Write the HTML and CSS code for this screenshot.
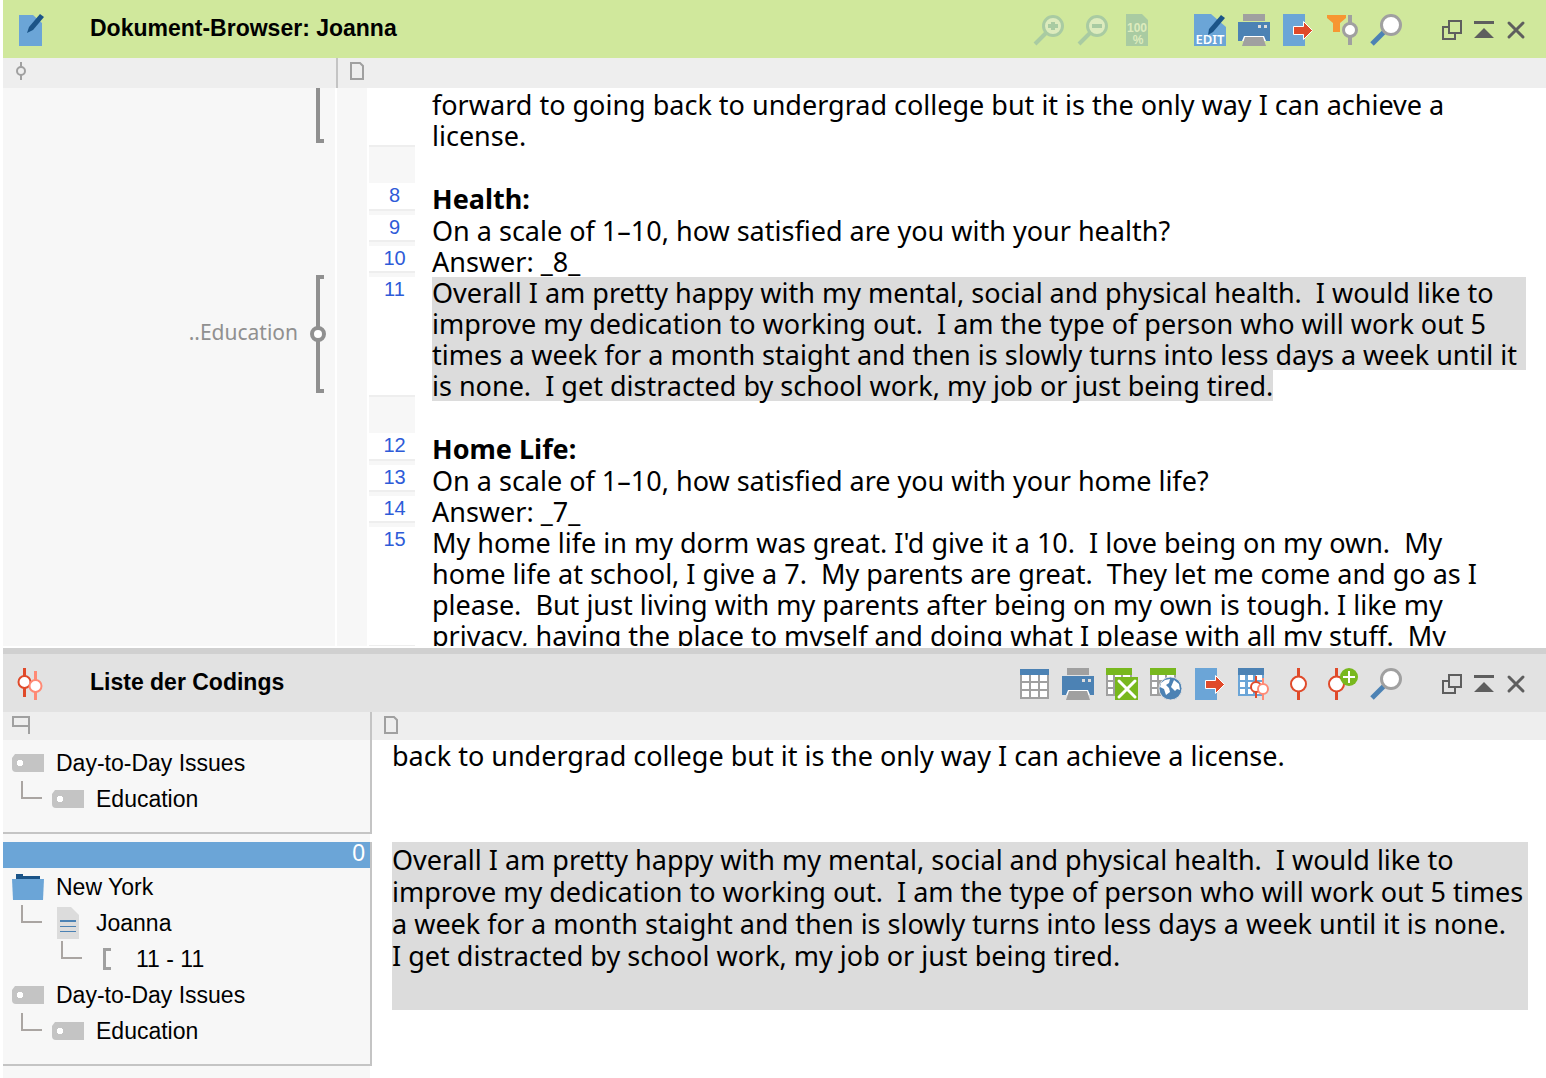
FILE: index.html
```html
<!DOCTYPE html>
<html lang="de">
<head>
  <meta charset="UTF-8" />
  <meta name="viewport" content="width=device-width, initial-scale=1" />
  <title>Dokument-Browser: Joanna</title>
  <link rel="stylesheet" href="styles.css">
</head>
<body>

  <!-- shared icons -->
  <svg class="sprite" aria-hidden="true">
    <symbol id="i-print" viewBox="0 0 32 32">
      <path fill="#a0a0a0" d="M5 0h22v7H5z" />
      <path fill="#4c82b4" d="M0 8h32v19H0z" />
      <path fill="#dcdcdc" d="M20 11h3v3h-3zM26 11h3v3h-3z" />
      <path fill="#fff" d="M6 22h20l2 5H4z" />
      <path fill="#a0a0a0" d="M7 23h18l3 9H4z" />
    </symbol>
    <symbol id="i-export" viewBox="0 0 32 32">
      <path fill="#6ba5d7" d="M1 0h22v32H1z" />
      <path fill="#e04a2a" stroke="#fff" d="M11.500 12.500h10v-5l9 9-9 9v-5h-10z" />
    </symbol>
    <symbol id="i-search" viewBox="0 0 32 32">
      <path stroke="#4c82b4" stroke-width="5" d="M15 17L2 30" />
      <circle cx="21" cy="11" r="9.500" fill="#fff" stroke="#a0a0a0" stroke-width="3" />
    </symbol>
    <symbol id="i-restore" viewBox="0 0 20 20">
      <path fill="none" stroke="#5e5e5e" stroke-width="2" d="M7 1h12v12H7zM6 7H1v12h12v-5" />
    </symbol>
    <symbol id="i-collapse" viewBox="0 0 20 20">
      <path fill="#5e5e5e" d="M0 1h20v3H0zM10 8l10 10H0z" />
    </symbol>
    <symbol id="i-close" viewBox="0 0 20 20">
      <path stroke="#5e5e5e" stroke-width="3" stroke-linecap="round" d="M3 3l14 14M17 3L3 17" />
    </symbol>
    <symbol id="i-page" viewBox="0 0 14 18">
      <path fill="none" stroke="#a0a0a0" stroke-width="2" d="M1 1h9l3 3v13H1z" />
    </symbol>
    <symbol id="i-tag" viewBox="0 0 32 18">
      <path fill="#c4c4c4" d="M3 0h29v18H4q-4 0-4-4V4z" />
      <path fill="#fff" d="M6 6h4v1h1v4h-1v1H6v-1H5V7h1z" />
    </symbol>
    <symbol id="i-branch" viewBox="0 0 22 18">
      <path fill="none" stroke="#aaa5a2" stroke-width="2" d="M2 0v17h20" />
    </symbol>
  </svg>

  <section class="pane">
    <header class="titlebar titlebar-active">
      <svg class="logo" viewBox="0 0 32 32" aria-hidden="true">
        <path fill="#6ba5d7" d="M3 1h14l9 8v23H3z" />
        <path fill="#1b5488" d="M24 0l4 3-11 13-6 3 2-6z" />
      </svg>
      <h1>Dokument-Browser: Joanna</h1>
      <div class="tools">
        <button type="button" aria-label="Vergrößern" disabled>
          <svg viewBox="0 0 32 32">
            <path stroke="#a9cba2" stroke-width="4" d="M12 19L1 30" />
            <circle cx="19" cy="12" r="9.500" fill="#ddebbd" stroke="#a9cba2" stroke-width="3" />
            <path fill="#a9cba2" d="M17 8h4v2h3v4h-3v2h-4v-2h-3v-4h3z" />
          </svg>
        </button>
        <button type="button" aria-label="Verkleinern" disabled>
          <svg viewBox="0 0 32 32">
            <path stroke="#a9cba2" stroke-width="4" d="M12 19L1 30" />
            <circle cx="19" cy="12" r="9.500" fill="#ddebbd" stroke="#a9cba2" stroke-width="3" />
            <path fill="#a9cba2" d="M14 10h10v4H14z" />
          </svg>
        </button>
        <button type="button" disabled>
          <svg viewBox="0 0 32 32">
            <path fill="#a9cba2" d="M4 0h16l6 6v26H4z" />
            <text class="icon-zoom" x="15" y="18" text-anchor="middle">100</text>
            <text class="icon-zoom" x="16" y="30" text-anchor="middle">%</text>
          </svg>
        </button>
      </div>
      <div class="tools">
        <button type="button">
          <svg viewBox="0 0 32 32">
            <path fill="#6ba5d7" d="M0 0h17l15 13v19H0z" />
            <path fill="#1b5488" d="M27 1l4 3-12 14-5 3 1-6z" />
            <text class="icon-edit" x="16" y="30" text-anchor="middle">EDIT</text>
          </svg>
        </button>
        <button type="button" aria-label="Drucken"><svg><use href="#i-print" /></svg></button>
        <button type="button" aria-label="Exportieren"><svg><use href="#i-export" /></svg></button>
        <button type="button" aria-label="Filter">
          <svg viewBox="0 0 32 32">
            <path fill="#f79632" d="M1 1h19v3l-6 5v9H7V9L1 4z" />
            <path fill="#a0a0a0" d="M22 1h4v30h-4z" />
            <circle cx="24" cy="16" r="6.500" fill="#fff" stroke="#a0a0a0" stroke-width="3" />
          </svg>
        </button>
        <button type="button" aria-label="Suchen"><svg><use href="#i-search" /></svg></button>
      </div>
      <div class="window-buttons">
        <button type="button" aria-label="Abdocken"><svg><use href="#i-restore" /></svg></button>
        <button type="button" aria-label="Minimieren"><svg><use href="#i-collapse" /></svg></button>
        <button type="button" aria-label="Schließen"><svg><use href="#i-close" /></svg></button>
      </div>
    </header>

    <div class="columns columns-doc">
      <div class="column-code">
        <svg width="12" height="18" viewBox="0 0 12 18" aria-hidden="true">
          <path stroke="#a0a0a0" stroke-width="2" d="M6 0v5M6 13v5" />
          <circle cx="6" cy="9" r="4" fill="none" stroke="#a0a0a0" stroke-width="2" />
        </svg>
      </div>
      <div class="column-page"><svg width="14" height="18" aria-hidden="true"><use href="#i-page" /></svg></div>
    </div>

    <div class="document">
      <div class="row">
        <div class="coding"><span class="stripe stripe-cut"></span></div>
        <div class="memo"></div>
        <div class="gutter"><span class="num"></span></div>
        <p class="text">forward to going back to undergrad college but it is the only way I can achieve a
license.</p>
      </div>
      <div class="row row-blank">
        <div class="coding"></div>
        <div class="memo"></div>
        <div class="gutter"></div>
      </div>
      <div class="row">
        <div class="coding"></div>
        <div class="memo"></div>
        <div class="gutter"><span class="num">8</span></div>
        <h2 class="text">Health:</h2>
      </div>
      <div class="row">
        <div class="coding"></div>
        <div class="memo"></div>
        <div class="gutter"><span class="num">9</span></div>
        <p class="text">On a scale of 1–10, how satisfied are you with your health?</p>
      </div>
      <div class="row">
        <div class="coding"></div>
        <div class="memo"></div>
        <div class="gutter"><span class="num">10</span></div>
        <p class="text">Answer: _8_</p>
      </div>
      <div class="row">
        <div class="coding">
          <span class="code-name">..Education</span>
          <span class="stripe"><span class="knob"></span></span>
        </div>
        <div class="memo"></div>
        <div class="gutter"><span class="num">11</span></div>
        <p class="text"><span class="marked">Overall I am pretty happy with my mental, social and physical health.  I would like to
improve my dedication to working out.  I am the type of person who will work out 5
times a week for a month staight and then is slowly turns into less days a week until it</span><span class="marked marked-end">is none.  I get distracted by school work, my job or just being tired.</span></p>
      </div>
      <div class="row row-blank">
        <div class="coding"></div>
        <div class="memo"></div>
        <div class="gutter"></div>
      </div>
      <div class="row">
        <div class="coding"></div>
        <div class="memo"></div>
        <div class="gutter"><span class="num">12</span></div>
        <h2 class="text">Home Life:</h2>
      </div>
      <div class="row">
        <div class="coding"></div>
        <div class="memo"></div>
        <div class="gutter"><span class="num">13</span></div>
        <p class="text">On a scale of 1–10, how satisfied are you with your home life?</p>
      </div>
      <div class="row">
        <div class="coding"></div>
        <div class="memo"></div>
        <div class="gutter"><span class="num">14</span></div>
        <p class="text">Answer: _7_</p>
      </div>
      <div class="row">
        <div class="coding"></div>
        <div class="memo"></div>
        <div class="gutter"><span class="num">15</span></div>
        <p class="text">My home life in my dorm was great. I'd give it a 10.  I love being on my own.  My
home life at school, I give a 7.  My parents are great.  They let me come and go as I
please.  But just living with my parents after being on my own is tough. I like my
privacy, having the place to myself and doing what I please with all my stuff.  My</p>
      </div>
    </div>
  </section>

  <section class="pane pane-codings">
    <header class="titlebar">
      <svg class="logo" viewBox="0 0 32 32" aria-hidden="true">
        <path stroke="#e04a2a" stroke-width="3" d="M8.500 0v29" />
        <circle cx="8.500" cy="14" r="6" fill="#fff" stroke="#e04a2a" stroke-width="2" />
        <path stroke="#ff8a75" stroke-width="3" d="M19.500 3v29" />
        <circle cx="19.500" cy="18" r="6" fill="#fff" stroke="#ff8a75" stroke-width="2" />
      </svg>
      <h1>Liste der Codings</h1>
      <div class="tools">
        <button type="button" aria-label="Tabelle">
          <svg viewBox="0 0 32 32">
            <path fill="#a0a0a0" d="M2 1h29v30H2z" />
            <path fill="#4c82b4" d="M2 1h29v6H2z" />
            <path fill="#fff" d="M4 7h7v6H4zM13 7h7v6h-7zM22 7h7v6h-7zM4 15h7v6H4zM13 15h7v6h-7zM22 15h7v6h-7zM4 23h7v6H4zM13 23h7v6h-7zM22 23h7v6h-7z" />
          </svg>
        </button>
        <button type="button" aria-label="Drucken"><svg><use href="#i-print" /></svg></button>
        <button type="button" aria-label="Als Excel-Tabelle öffnen">
          <svg viewBox="0 0 32 32">
            <path fill="#a0a0a0" d="M0 6h26v22H0z" />
            <path fill="#78b81e" d="M0 0h26v7H0z" />
            <path fill="#fff" d="M2 7h5v5H2zM9 7h6v5H9zM17 7h7v5h-7zM2 14h5v5H2zM2 21h5v5H2z" />
            <path fill="#78b81e" d="M9 9h23v23H9z" />
            <path stroke="#fff" stroke-width="3" stroke-linecap="round" d="M13 13l16 16M29 13L13 29" />
          </svg>
        </button>
        <button type="button" aria-label="Als Webseite öffnen">
          <svg viewBox="0 0 32 32">
            <path fill="#a0a0a0" d="M0 6h26v22H0z" />
            <path fill="#78b81e" d="M0 0h26v7H0z" />
            <path fill="#fff" d="M2 7h5v5H2zM9 7h6v5H9zM17 7h7v5h-7zM2 14h5v5H2zM2 21h5v5H2z" />
            <circle cx="20.500" cy="20.500" r="11.500" fill="#4c82b4" stroke="#e2e2e2" />
            <path fill="#fff" d="M15 12l5-1-1 4-3 2 3 3 1 4-4 3-2-6-4-2 1-4zM24 12l5 4 1 6-3-1-2 2-4-4z" />
          </svg>
        </button>
        <button type="button" aria-label="Exportieren"><svg><use href="#i-export" /></svg></button>
        <button type="button" aria-label="Codings als Tabelle">
          <svg viewBox="0 0 32 32">
            <path fill="#6ba5d7" d="M0 0h26v28H0z" />
            <path fill="#4c82b4" d="M0 0h26v7H0z" />
            <path fill="#fff" d="M2 7h5v5H2zM10 7h5v5h-5zM18 7h6v5h-6zM2 14h5v5H2zM10 14h5v5h-5zM18 14h6v5h-6zM2 21h5v5H2zM10 21h5v5h-5zM18 21h6v5h-6z" />
            <path stroke="#e04a2a" stroke-width="2" d="M18 8v22" />
            <circle cx="18" cy="19" r="5" fill="#fff" stroke="#e04a2a" stroke-width="2" />
            <path stroke="#ff8a75" stroke-width="2" d="M25 10v22" />
            <circle cx="25" cy="21" r="5" fill="#fff" stroke="#ff8a75" stroke-width="2" />
          </svg>
        </button>
        <button type="button" aria-label="Coding">
          <svg viewBox="0 0 32 32">
            <path stroke="#e04a2a" stroke-width="3" d="M16.500 0v32" />
            <circle cx="16.500" cy="16" r="7.500" fill="#fff" stroke="#e04a2a" stroke-width="2" />
          </svg>
        </button>
        <button type="button" aria-label="Neues Coding">
          <svg viewBox="0 0 32 32">
            <path stroke="#e04a2a" stroke-width="3" d="M10.500 0v32" />
            <circle cx="10.500" cy="16" r="7.500" fill="#fff" stroke="#e04a2a" stroke-width="2" />
            <circle cx="23" cy="9" r="9" fill="#78b81e" />
            <path stroke="#fff" stroke-width="2" d="M23 3v12M17 9h12" />
          </svg>
        </button>
        <button type="button" aria-label="Suchen"><svg><use href="#i-search" /></svg></button>
      </div>
      <div class="window-buttons">
        <button type="button" aria-label="Abdocken"><svg><use href="#i-restore" /></svg></button>
        <button type="button" aria-label="Minimieren"><svg><use href="#i-collapse" /></svg></button>
        <button type="button" aria-label="Schließen"><svg><use href="#i-close" /></svg></button>
      </div>
    </header>

    <div class="columns columns-codings">
      <div class="column-code">
        <svg width="18" height="18" viewBox="0 0 18 18" aria-hidden="true">
          <path fill="none" stroke="#a0a0a0" stroke-width="2" d="M17 18V1H1v9h16" />
        </svg>
      </div>
      <div class="column-page"><svg width="14" height="18" aria-hidden="true"><use href="#i-page" /></svg></div>
    </div>

    <div class="codings">
      <div class="source">
        <ul class="tree">
          <li><svg class="tag"><use href="#i-tag" /></svg>Day-to-Day Issues</li>
          <li><svg class="branch"><use href="#i-branch" /></svg><svg class="tag"><use href="#i-tag" /></svg>Education</li>
        </ul>
      </div>
      <p class="passage">back to undergrad college but it is the only way I can achieve a license.</p>

      <div class="source">
        <div class="weight">0</div>
        <ul class="tree">
          <li>
            <svg class="folder" viewBox="0 0 32 26">
              <path fill="#1b5488" d="M4 0h7v2h17v4H4z" />
              <path fill="#6ba5d7" d="M0 5h32l-1 21H1z" />
            </svg>New York
          </li>
          <li>
            <svg class="branch"><use href="#i-branch" /></svg>
            <svg class="doc" viewBox="0 0 32 32">
              <path fill="#dcdcdc" d="M5 0h14l8 8v24H5z" />
              <path fill="#4c82b4" d="M8 13h16v2H8zM8 19h16v1H8zM8 24h16v1H8z" />
            </svg>Joanna
          </li>
          <li class="level-2">
            <svg class="branch"><use href="#i-branch" /></svg>
            <svg class="range" viewBox="0 0 32 22"><path fill="none" stroke="#a0a0a0" stroke-width="3" d="M19 1.500h-6.500v19H19" /></svg>11 - 11
          </li>
          <li><svg class="tag"><use href="#i-tag" /></svg>Day-to-Day Issues</li>
          <li><svg class="branch"><use href="#i-branch" /></svg><svg class="tag"><use href="#i-tag" /></svg>Education</li>
        </ul>
      </div>
      <p class="passage passage-marked">Overall I am pretty happy with my mental, social and physical health.  I would like to
improve my dedication to working out.  I am the type of person who will work out 5 times
a week for a month staight and then is slowly turns into less days a week until it is none.
I get distracted by school work, my job or just being tired.</p>
    </div>
  </section>

</body>
</html>
```

FILE: styles.css
```css
* {
  box-sizing: border-box;
}
body {
  margin: 0;
  padding-left: 3px;
  height: 100vh;
  display: grid;
  grid-template-rows: 648fr 430fr;
  overflow: hidden;
  background: #fff;
  color: #000;
  font-family: "Liberation Sans", Arial, sans-serif;
}
h1, h2, p, ul {
  margin: 0;
  padding: 0;
}
svg {
  display: block;
  flex: none;
}
.sprite {
  position: absolute;
  width: 0;
  height: 0;
}
.pane {
  display: flex;
  flex-direction: column;
  min-height: 0;
  overflow: hidden;
}
.pane-codings {
  border-top: 6px solid #d0d0d0;
}

/* title bars */
.titlebar {
  display: flex;
  align-items: center;
  gap: 40px;
  flex: none;
  height: 58px;
  padding: 2px 20px 0 13px;
  background: #e2e2e2;
}
.titlebar-active {
  background: #d0e89c;
}
.titlebar h1 {
  flex: 1;
  margin: 0 0 4px 2px;
  font-size: 23px;
  line-height: 28px;
}
.logo {
  width: 32px;
  height: 32px;
}
.tools, .window-buttons {
  display: flex;
  gap: 12px;
}
.titlebar button {
  padding: 0;
  border: 0;
  background: none;
}
.tools svg {
  width: 32px;
  height: 32px;
  overflow: visible;
}
.window-buttons svg {
  width: 20px;
  height: 20px;
}
.icon-zoom {
  font: bold 12px "Liberation Sans Narrow", "Liberation Sans", sans-serif;
  fill: #ddebbd;
}
.icon-edit {
  font: 600 13px "Noto Sans", sans-serif;
  fill: #fff;
}

/* column headers */
.columns {
  display: grid;
  flex: none;
  background: #eee;
}
.columns-doc {
  grid-template-columns: 335px 1fr;
  height: 30px;
}
.columns-codings {
  grid-template-columns: 369px 1fr;
  height: 28px;
}
.column-code {
  padding: 4px 9px;
  border-right: 2px solid #c4c4c4;
}
.columns-doc .column-code {
  padding-left: 12px;
}
.column-page {
  padding: 4px 12px;
}

/* document text */
.document {
  flex: 1;
  min-height: 0;
  overflow: hidden;
  border-bottom: 2px solid #fff;
}
.row {
  display: grid;
  grid-template-columns: 332px 30px 46px 1fr;
  column-gap: 2px;
}
.row-blank {
  height: 32px;
}
.coding, .memo, .gutter {
  background: #f7f7f7;
}
.coding {
  display: flex;
  justify-content: flex-end;
  align-items: center;
}
.code-name {
  margin: 0 18px 14px 0;
  font: 21px "Noto Sans", sans-serif;
  color: #909090;
}
.stripe {
  position: relative;
  align-self: stretch;
  width: 8px;
  margin: -2px 11px 8px 0;
  border: 4px solid #909090;
  border-right: 0;
}
.stripe-cut {
  border-top: 0;
}
.knob {
  position: absolute;
  top: calc(50% - 8px);
  left: -10px;
  width: 16px;
  height: 16px;
  border: 4px solid #909090;
  border-radius: 50%;
  background: #fff;
}
.gutter {
  display: flex;
  padding-bottom: 4px;
}
.row-blank .gutter {
  padding: 0;
}
.num {
  width: 100%;
  padding-left: 5px;
  border-bottom: 2px solid #eee;
  background: #fff;
  font-size: 20px;
  line-height: 25px;
  text-align: center;
  color: #2e5bd8;
}
.text {
  padding: 0 20px 0 15px;
  font: 27px/31px "Noto Sans", sans-serif;
  white-space: pre;
}
.row:first-child .text {
  padding-top: 1px;
}
h2.text {
  font-weight: bold;
  line-height: 32px;
}
.marked {
  display: block;
  background: #dcdcdc;
}
.marked-end {
  width: fit-content;
}

/* list of codings */
.codings {
  display: grid;
  grid-template-columns: 369px 1fr;
  grid-auto-rows: max-content;
  row-gap: 8px;
  flex: 1;
  min-height: 0;
  background: linear-gradient(to right, #f7f7f7 367px, #fff 367px);
}
.source {
  border-right: 2px solid #c4c4c4;
  border-bottom: 2px solid #c4c4c4;
}
.weight {
  height: 26px;
  padding-right: 5px;
  background: #6ba5d7;
  color: #fff;
  font-size: 23px;
  line-height: 22px;
  text-align: right;
}
.tree {
  padding: 5px 9px 15px;
  list-style: none;
  font-size: 23px;
}
.weight + .tree {
  padding-top: 1px;
}
.tree li {
  display: flex;
  align-items: center;
  height: 36px;
}
.level-2 {
  padding-left: 40px;
}
.tree svg {
  width: 32px;
  height: 32px;
  margin-right: 12px;
}
.tree .tag {
  height: 18px;
}
.tree .folder {
  height: 26px;
}
.tree .range {
  height: 22px;
}
.tree .branch {
  width: 22px;
  height: 18px;
  margin: 0 10px 18px 8px;
}
.passage {
  margin: 0 18px 0 20px;
  font: 27px/32px "Noto Sans", sans-serif;
  white-space: pre;
}
.passage-marked {
  align-self: start;
  min-height: 168px;
  padding-top: 2px;
  background: #dcdcdc;
}
```
